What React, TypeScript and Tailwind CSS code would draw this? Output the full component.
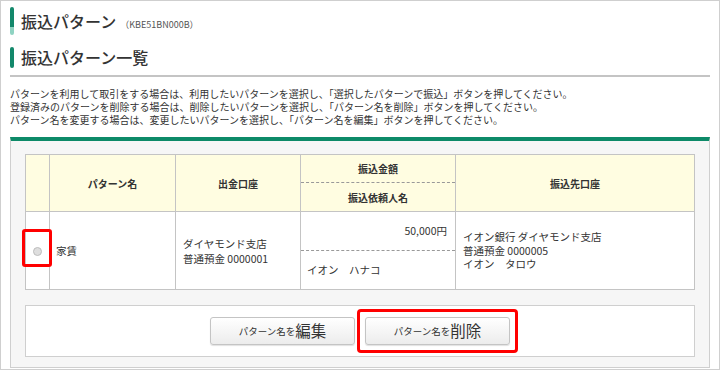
import React from 'react';

const font = { fontFamily: '"Noto Sans CJK JP", "Noto Sans", sans-serif' };

function Heading({ children, light }: { children: React.ReactNode; light?: boolean }) {
  return (
    <div className="flex items-center">
      <span
        className={`block w-[4px] rounded-[2px] ${
          light ? 'h-[28px] bg-gradient-to-b from-[#13886b] from-70% to-[#8fd3c2] to-70%' : 'h-[21px] bg-[#13886b]'
        }`}
      />
      <div className="ml-[7px] flex items-baseline">{children}</div>
    </div>
  );
}

function PatternButton({ label }: { label: string }) {
  return (
    <button className="flex h-[28px] w-[145px] items-center justify-center rounded-[3px] border border-[#c4c4c4] bg-gradient-to-b from-white to-[#ececec] text-[#333] shadow-[0_1px_1px_rgba(0,0,0,0.12)]">
      <span className="text-[9.5px]">パターン名を</span>
      <span className="text-[15.5px] leading-none">{label}</span>
    </button>
  );
}

export default function App() {
  return (
    <div className="h-[370px] w-[720px] overflow-hidden border border-[#cfcfcf] bg-white text-[#333]" style={font}>
      <div className="pl-[9px] pr-[9px]">
        <div className="mt-[6px]">
          <Heading light>
            <span className="text-[16px] font-medium">振込パターン</span>
            <span className="ml-[4px] text-[9px] text-[#555]">（KBE51BN000B）</span>
          </Heading>
        </div>
        <div className="mt-[10px]">
          <Heading>
            <span className="text-[16px] font-medium">振込パターン一覧</span>
          </Heading>
        </div>
        <div className="mt-[6px] border-b-2 border-[#c4c4c4]" />

        <div className="mt-[10px] text-[10px] leading-[13px] text-[#333]">
          <p>パターンを利用して取引をする場合は、利用したいパターンを選択し、「選択したパターンで振込」ボタンを押してください。</p>
          <p>登録済みのパターンを削除する場合は、削除したいパターンを選択し、「パターン名を削除」ボタンを押してください。</p>
          <p>パターン名を変更する場合は、変更したいパターンを選択し、「パターン名を編集」ボタンを押してください。</p>
        </div>

        <div className="mt-[11px] border-x border-t-4 border-b border-x-[#cfcfcf] border-b-[#cfcfcf] border-t-[#0d8a68] bg-[#f6f6f6] px-[14px] pt-[13px] pb-[10px]">
          <div className="relative">
            <table className="w-full border-collapse text-[10.5px]">
              <colgroup>
                <col className="w-[24px]" />
                <col className="w-[126px]" />
                <col className="w-[125px]" />
                <col className="w-[155px]" />
                <col />
              </colgroup>
              <thead>
                <tr className="h-[57px] bg-[#fffde1] text-[10px] font-bold">
                  <th className="border border-[#c4c4c4]" />
                  <th className="border border-[#c4c4c4]">パターン名</th>
                  <th className="border border-[#c4c4c4]">出金口座</th>
                  <th className="border border-[#c4c4c4] p-0">
                    <div className="flex h-[28px] items-center justify-center border-b border-dashed border-[#999]">振込金額</div>
                    <div className="flex h-[28px] items-center justify-center">振込依頼人名</div>
                  </th>
                  <th className="border border-[#c4c4c4]">振込先口座</th>
                </tr>
              </thead>
              <tbody className="bg-white">
                <tr className="h-[78px]">
                  <td className="border border-[#c4c4c4] text-center">
                    <span className="inline-block h-[9px] w-[9px] rounded-full border border-[#bdbdbd] bg-[#dedede] align-middle" />
                  </td>
                  <td className="border border-[#c4c4c4] px-[6px]">家賃</td>
                  <td className="border border-[#c4c4c4] px-[7px] leading-[15px]">
                    <div>ダイヤモンド支店</div>
                    <div>普通預金 0000001</div>
                  </td>
                  <td className="border border-[#c4c4c4] p-0">
                    <div className="flex h-[39px] items-center justify-end border-b border-dashed border-[#999] pr-[8px]">50,000円</div>
                    <div className="flex h-[38px] items-center px-[6px]">イオン　ハナコ</div>
                  </td>
                  <td className="border border-[#c4c4c4] px-[7px] leading-[13.5px]">
                    <div>イオン銀行 ダイヤモンド支店</div>
                    <div>普通預金 0000005</div>
                    <div>イオン　タロウ</div>
                  </td>
                </tr>
              </tbody>
            </table>
            <div className="pointer-events-none absolute left-[-3px] top-[75px] h-[38px] w-[30px] rounded-[3px] border-[3px] border-[#ff0000]" />
          </div>

          <div className="relative mt-[15px] flex h-[52px] items-center justify-center gap-[10px] border border-[#cfcfcf] bg-white">
            <PatternButton label="編集" />
            <div className="relative">
              <PatternButton label="削除" />
              <div className="pointer-events-none absolute -inset-x-[8px] -inset-y-[8px] rounded-[4px] border-[3px] border-[#ff0000]" />
            </div>
          </div>
        </div>
      </div>
    </div>
  );
}
